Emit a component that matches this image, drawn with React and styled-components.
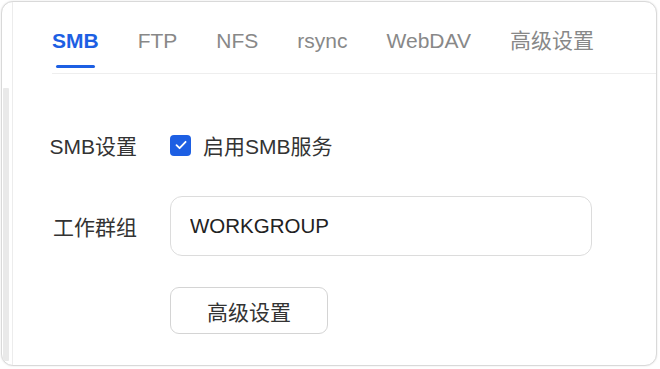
import React, { useState } from "react";
import styled, { createGlobalStyle } from "styled-components";

const Global = createGlobalStyle`
  html, body { margin: 0; padding: 0; background: #ffffff; }
  body { font-family: "Liberation Sans", "Noto Sans CJK SC", sans-serif; }
  * { box-sizing: border-box; }
`;

const Card = styled.div`
  margin: 1px 3px 3px 1px;
  width: 656px;
  height: 365px;
  border: 1px solid #d9d9d9;
  border-radius: 12px;
  box-shadow: 0 0 2px rgba(0, 0, 0, 0.12);
  background: #fff;
  display: flex;
  overflow: hidden;
`;

const Rail = styled.div`
  width: 11px;
  flex: none;
  border-right: 1px solid #ececec;
  display: flex;
  flex-direction: column;
  padding: 86px 3px 4px 1px;
`;

const Thumb = styled.div`
  flex: 1;
  background: #e9e9e9;
  border-radius: 1px;
`;

const Main = styled.div`
  flex: 1;
  display: flex;
  flex-direction: column;
`;

const TabBar = styled.div`
  margin-left: 39px;
  display: flex;
  gap: 39px;
  padding-top: 27px;
  padding-bottom: 5px;
  border-bottom: 1px solid #eeeeee;
`;

const Tab = styled.div`
  display: flex;
  flex-direction: column;
  align-items: center;
  font-size: 21px;
  line-height: 24px;
  font-weight: ${(p) => (p.$active ? 700 : 400)};
  color: ${(p) => (p.$active ? "#1d5fe3" : "#888888")};
  cursor: pointer;
  white-space: nowrap;
`;

const Underline = styled.div`
  margin-top: 12px;
  width: 39px;
  height: 3px;
  border-radius: 2px;
  background: ${(p) => (p.$show ? "#1d5fe3" : "transparent")};
`;

const Form = styled.div`
  margin-top: 51px;
  margin-left: 34px;
  display: grid;
  grid-template-columns: 90px 1fr;
  column-gap: 33px;
  row-gap: 31px;
  align-items: center;
`;

const Label = styled.div`
  text-align: right;
  font-size: 21px;
  color: #333333;
  white-space: nowrap;
`;

const CheckRow = styled.label`
  height: 40px;
  display: flex;
  align-items: center;
  gap: 12px;
  font-size: 21px;
  color: #333333;
  cursor: pointer;
`;

const Box = styled.span`
  width: 21px;
  height: 21px;
  border-radius: 4px;
  background: ${(p) => (p.$on ? "#1d5fe3" : "#fff")};
  border: ${(p) => (p.$on ? "none" : "1px solid #c8c8c8")};
  display: flex;
  align-items: center;
  justify-content: center;
`;

const Input = styled.input`
  width: 422px;
  height: 60px;
  border: 1px solid #dcdcdc;
  border-radius: 12px;
  padding: 0 19px;
  font-family: "Liberation Sans", "Noto Sans CJK SC", sans-serif;
  font-size: 20.5px;
  color: #222222;
  outline: none;
  background: #fff;
`;

const Button = styled.button`
  width: 158px;
  height: 47px;
  border: 1px solid #d4d4d4;
  border-radius: 9px;
  background: #fff;
  font-family: "Liberation Sans", "Noto Sans CJK SC", sans-serif;
  font-size: 21px;
  color: #333333;
  cursor: pointer;
`;

const Spacer = styled.div``;

const tabs = ["SMB", "FTP", "NFS", "rsync", "WebDAV", "高级设置"];

export default function App() {
  const [active, setActive] = useState(0);
  const [on, setOn] = useState(true);
  const [group, setGroup] = useState("WORKGROUP");
  return (
    <>
      <Global />
      <Card>
        <Rail>
          <Thumb />
        </Rail>
        <Main>
          <TabBar>
            {tabs.map((t, i) => (
              <Tab key={t} $active={i === active} onClick={() => setActive(i)}>
                {t}
                <Underline $show={i === active} />
              </Tab>
            ))}
          </TabBar>
          <Form>
            <Label>SMB设置</Label>
            <CheckRow onClick={() => setOn(!on)}>
              <Box $on={on}>
                {on && (
                  <svg width="14" height="14" viewBox="0 0 14 14">
                    <path d="M2.5 7.2 L5.6 10.2 L11.6 3.8" fill="none" stroke="#fff" strokeWidth="1.8" strokeLinecap="round" strokeLinejoin="round" />
                  </svg>
                )}
              </Box>
              启用SMB服务
            </CheckRow>
            <Label>工作群组</Label>
            <Input value={group} onChange={(e) => setGroup(e.target.value)} />
            <Spacer />
            <div>
              <Button>高级设置</Button>
            </div>
          </Form>
        </Main>
      </Card>
    </>
  );
}
